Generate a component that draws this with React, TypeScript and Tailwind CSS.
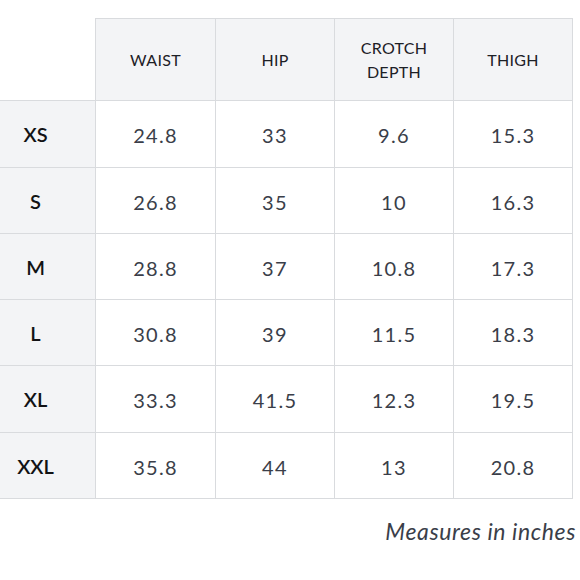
import React from "react";

const headers = ["WAIST", "HIP", "CROTCH\nDEPTH", "THIGH"];
const rows: [string, string[], string][] = [
  ["XS", ["24.8", "33", "9.6", "15.3"], "h-[67px]"],
  ["S", ["26.8", "35", "10", "16.3"], "h-[66px]"],
  ["M", ["28.8", "37", "10.8", "17.3"], "h-[66px]"],
  ["L", ["30.8", "39", "11.5", "18.3"], "h-[66px]"],
  ["XL", ["33.3", "41.5", "12.3", "19.5"], "h-[67px]"],
  ["XXL", ["35.8", "44", "13", "20.8"], "h-[66px]"],
];
const widths = ["w-[120px]", "w-[119px]", "w-[119px]", "w-[119px]"];

export default function App() {
  return (
    <div
      className="w-[580px] h-[580px] bg-white pt-[18px]"
      style={{ fontFamily: "Lato, 'Noto Sans', sans-serif" }}
    >
      <div className="flex h-[83px]">
        <div className="w-[96px] border-r border-b border-[#d9dbde] bg-white" />
        {headers.map((h, i) => (
          <div
            key={i}
            className={`${widths[i]} flex items-center justify-center border-t border-r border-b border-[#d9dbde] bg-[#f3f4f6] text-center text-[16px] leading-[24px] tracking-[0.3px] text-[#1d2026] whitespace-pre-line`}
          >
            {h}
          </div>
        ))}
      </div>
      {rows.map(([size, vals, h]) => (
        <div key={size} className={`flex ${h}`}>
          <div className="w-[96px] flex items-center justify-center pr-[24px] border-r border-b border-[#d9dbde] bg-[#f3f4f6] text-[20px] font-semibold text-[#111214]">
            {size}
          </div>
          {vals.map((v, i) => (
            <div
              key={i}
              className={`${widths[i]} flex items-center justify-center pt-[2px] border-r border-b border-[#d9dbde] text-[20px] tracking-[1.3px] text-[#3a3e49]`}
            >
              {v}
            </div>
          ))}
        </div>
      ))}
      <div className="w-[576px] flex justify-end pt-[15px] italic text-[23px] tracking-[0.6px] text-[#3a3e49]">
        Measures in inches
      </div>
    </div>
  );
}
